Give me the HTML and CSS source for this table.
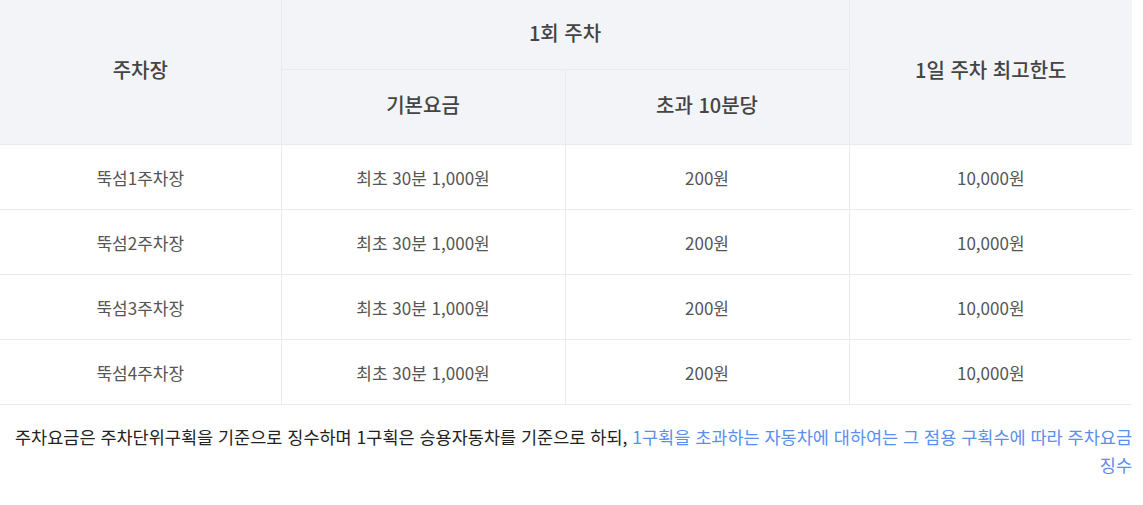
FILE: index.html
```html
<!DOCTYPE html>
<html lang="ko">
<head>
<meta charset="UTF-8" />
<meta name="viewport" content="width=device-width, initial-scale=1" />
<title>주차요금</title>
<link rel="stylesheet" href="styles.css">
</head>
<body>

<div class="fee-wrap">
  <table class="fee-table">
    <colgroup>
      <col class="c-name">
      <col class="c-base">
      <col class="c-over">
      <col class="c-max">
    </colgroup>
    <thead>
      <tr class="head-top">
        <th rowspan="2">주차장</th>
        <th colspan="2">1회 주차</th>
        <th rowspan="2">1일 주차 최고한도</th>
      </tr>
      <tr class="head-sub">
        <th>기본요금</th>
        <th>초과 10분당</th>
      </tr>
    </thead>
    <tbody>
      <tr>
        <td>뚝섬1주차장</td>
        <td>최초 30분 1,000원</td>
        <td>200원</td>
        <td>10,000원</td>
      </tr>
      <tr>
        <td>뚝섬2주차장</td>
        <td>최초 30분 1,000원</td>
        <td>200원</td>
        <td>10,000원</td>
      </tr>
      <tr>
        <td>뚝섬3주차장</td>
        <td>최초 30분 1,000원</td>
        <td>200원</td>
        <td>10,000원</td>
      </tr>
      <tr>
        <td>뚝섬4주차장</td>
        <td>최초 30분 1,000원</td>
        <td>200원</td>
        <td>10,000원</td>
      </tr>
    </tbody>
  </table>

  <p class="fee-note">
    주차요금은 주차단위구획을 기준으로 징수하며 1구획은 승용자동차를 기준으로 하되, <span class="hl">1구획을 초과하는 자동차에 대하여는 그 점용 구획수에 따라 주차요금 징수</span>
  </p>
</div>

</body>
</html>
```

FILE: styles.css
```css
body {
  margin: 0;
  background: #fff;
  font-family: "Noto Sans CJK KR", "Noto Sans", sans-serif;
  color: #444;
}
.fee-wrap {
  width: 1132px;
}
.fee-table {
  width: 100%;
  border-collapse: collapse;
  table-layout: fixed;
}
.c-name { width: 281px; }
.c-base { width: 284px; }
.c-over { width: 284px; }
.c-max  { width: 283px; }
.fee-table th,
.fee-table td {
  text-align: center;
  border: 1px solid #ebebeb;
  padding: 0;
}
.fee-table tr > :first-child {
  border-left: none;
}
.fee-table tr > :last-child {
  border-right: none;
}
.fee-table thead tr:first-child th {
  border-top: none;
}
.fee-table th {
  background: #f3f4f8;
  font-size: 20px;
  font-weight: 500;
  color: #444;
  padding-bottom: 5px;
}
.head-top th {
  height: 64px;
}
.head-sub th {
  height: 69px;
}
.fee-table td {
  height: 64px;
  font-size: 17px;
  color: #555;
}
.fee-note {
  margin: 0;
  padding-top: 18px;
  font-size: 17.5px;
  line-height: 28px;
  text-align: right;
  color: #222;
}
.fee-note .hl {
  color: #5b8ef0;
}
```
